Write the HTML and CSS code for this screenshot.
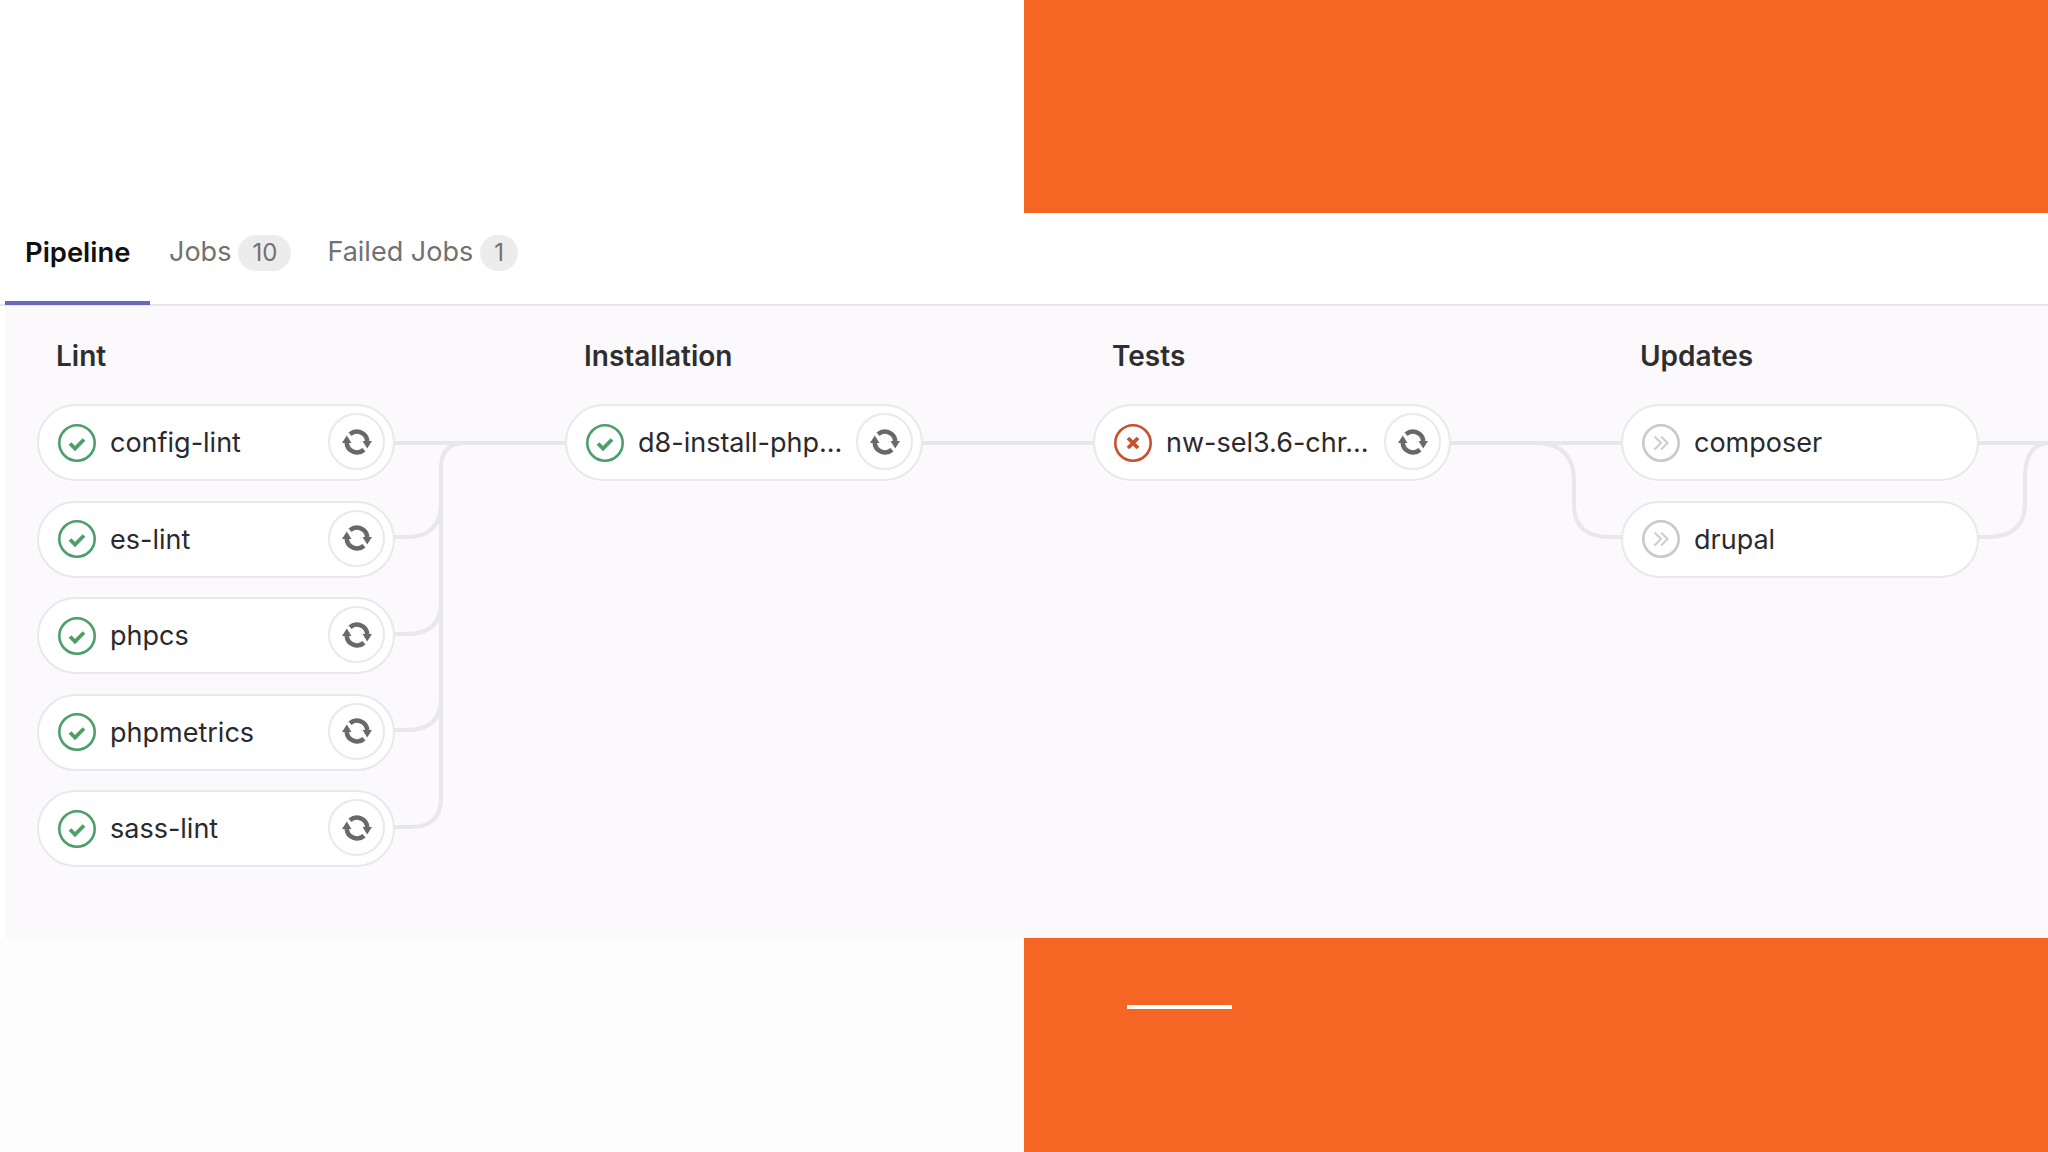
FILE: index.html
```html
<!DOCTYPE html>
<html lang="en">
<head>
  <meta charset="UTF-8">
  <title>Pipeline</title>
  <link rel="stylesheet" href="styles.css">
</head>
<body>

  <svg class="icon-defs" width="0" height="0">
    <symbol id="icon-success" viewBox="0 0 38 38">
      <circle cx="19" cy="19" r="17.7" fill="#fff" stroke="#4c9e6a" stroke-width="2.6"/>
      <path d="M12 19.5l5 5 9-9" fill="none" stroke="#4c9e6a" stroke-width="3.8"/>
    </symbol>
    <symbol id="icon-failed" viewBox="0 0 38 38">
      <circle cx="19" cy="19" r="17.7" fill="#fff" stroke="#c9502f" stroke-width="2.6"/>
      <path d="M14 14l10 10M24 14l-10 10" fill="none" stroke="#c9502f" stroke-width="3.8"/>
    </symbol>
    <symbol id="icon-skipped" viewBox="0 0 38 38">
      <circle cx="19" cy="19" r="17.7" fill="#fff" stroke="#c9c9c9" stroke-width="2.6"/>
      <path d="M12.5 12.5l6.5 6.5-6.5 6.5M19 12.5l6.5 6.5-6.5 6.5" fill="none" stroke="#cfcfcf" stroke-width="2.2"/>
    </symbol>
    <symbol id="icon-retry" viewBox="0 0 30 28">
      <path d="M8 6.3A10.4 10.4 0 0 1 25.3 13" fill="none" stroke="#68686d" stroke-width="4.6"/>
      <path d="M22 21.7A10.4 10.4 0 0 1 4.7 15" fill="none" stroke="#68686d" stroke-width="4.6"/>
      <path d="M20.5 13h9.5l-4.8 7.5z" fill="#68686d"/>
      <path d="M0 15h9.5l-4.7-7.5z" fill="#68686d"/>
    </symbol>
  </svg>

  <div class="top-band">
    <div class="orange-block"></div>
  </div>

  <nav class="tabs">
    <div class="tab active">Pipeline</div>
    <div class="tab">Jobs <span class="badge">10</span></div>
    <div class="tab">Failed Jobs <span class="badge badge-small">1</span></div>
  </nav>

  <div class="pipeline">
    <!-- connector lines between the stages, in panel coordinates -->
    <svg class="connectors" viewBox="0 0 2043 632" width="2043" height="632">
      <g fill="none" stroke="#e8e7ea" stroke-width="4">
        <path d="M388 137H560"/>
        <path d="M460 137Q436 137 436 162V492Q436 521 406 521H388"/>
        <path d="M388 231H402Q436 231 436 196"/>
        <path d="M388 328H402Q436 328 436 296"/>
        <path d="M388 424H402Q436 424 436 392"/>
        <path d="M916 137H1088"/>
        <path d="M1444 137H1616"/>
        <path d="M1530 137Q1569 137 1569 175V199Q1569 231 1605 231H1620"/>
        <path d="M1972 137H2043"/>
        <path d="M1972 231H1982Q2020 231 2020 197V171Q2020 139 2043 137"/>
      </g>
    </svg>

    <div class="stage">
      <h3 class="stage-title">Lint</h3>
      <div class="job"><svg class="status"><use href="#icon-success"/></svg><span class="job-name">config-lint</span><span class="retry"><svg><use href="#icon-retry"/></svg></span></div>
      <div class="job"><svg class="status"><use href="#icon-success"/></svg><span class="job-name">es-lint</span><span class="retry"><svg><use href="#icon-retry"/></svg></span></div>
      <div class="job"><svg class="status"><use href="#icon-success"/></svg><span class="job-name">phpcs</span><span class="retry"><svg><use href="#icon-retry"/></svg></span></div>
      <div class="job"><svg class="status"><use href="#icon-success"/></svg><span class="job-name">phpmetrics</span><span class="retry"><svg><use href="#icon-retry"/></svg></span></div>
      <div class="job"><svg class="status"><use href="#icon-success"/></svg><span class="job-name">sass-lint</span><span class="retry"><svg><use href="#icon-retry"/></svg></span></div>
    </div>

    <div class="stage">
      <h3 class="stage-title">Installation</h3>
      <div class="job"><svg class="status"><use href="#icon-success"/></svg><span class="job-name">d8-install-php...</span><span class="retry"><svg><use href="#icon-retry"/></svg></span></div>
    </div>

    <div class="stage">
      <h3 class="stage-title">Tests</h3>
      <div class="job"><svg class="status"><use href="#icon-failed"/></svg><span class="job-name">nw-sel3.6-chr...</span><span class="retry"><svg><use href="#icon-retry"/></svg></span></div>
    </div>

    <div class="stage">
      <h3 class="stage-title">Updates</h3>
      <div class="job"><svg class="status"><use href="#icon-skipped"/></svg><span class="job-name">composer</span></div>
      <div class="job"><svg class="status"><use href="#icon-skipped"/></svg><span class="job-name">drupal</span></div>
    </div>
  </div>

  <div class="bottom-band">
    <div class="orange-block">
      <div class="rule"></div>
    </div>
  </div>

</body>
</html>
```

FILE: styles.css
```css
* {
  box-sizing: border-box;
}
html, body {
  margin: 0;
  padding: 0;
}
body {
  width: 2048px;
  height: 1152px;
  overflow: hidden;
  background-color: #fff;
  font-family: Inter, "Liberation Sans", sans-serif;
  color: #2e2e2e;
}
.icon-defs {
  position: absolute;
}

.top-band {
  height: 213px;
  display: flex;
  justify-content: flex-end;
}
.orange-block {
  width: 1024px;
  background-color: #f56624;
}

.tabs {
  height: 93px;
  padding-left: 5px;
  display: flex;
  border-bottom: 2px solid #e6e5e8;
}
.tab {
  height: 92px;
  padding: 21px 17px 0 19px;
  display: flex;
  align-items: flex-start;
  gap: 7px;
  font-size: 27px;
  line-height: 36px;
  color: #717171;
}
.tab.active {
  width: 145px;
  padding-left: 20px;
  font-size: 27.4px;
  font-weight: 600;
  color: #111;
  border-bottom: 4px solid #6666c4;
}
.badge {
  width: 53px;
  height: 36px;
  margin-top: 1px;
  border-radius: 18px;
  background-color: #ececec;
  font-size: 24px;
  text-align: center;
}
.badge-small {
  width: 38px;
}

.pipeline {
  position: relative;
  height: 632px;
  margin-left: 5px;
  padding: 33px 0 0 32px;
  display: flex;
  background-color: #fbf9fc;
}
.connectors {
  position: absolute;
  top: 0;
  left: 0;
}
.stage {
  position: relative;
  flex: none;
  width: 528px;
}
.stage-title {
  margin: 0 0 31px 19px;
  font-size: 28px;
  line-height: 34px;
  font-weight: 600;
  color: #2e2e2e;
}
.job {
  width: 358px;
  height: 77px;
  margin-bottom: 19.6px;
  padding: 0 8px 0 19px;
  display: flex;
  align-items: center;
  background-color: #fff;
  border: 2px solid #e9e8eb;
  border-radius: 39px;
}
.status {
  width: 38px;
  height: 38px;
  flex: none;
}
.job-name {
  margin-left: 14px;
  flex: 1;
  font-size: 27px;
  white-space: nowrap;
  color: #2a2a2e;
}
.retry {
  width: 57px;
  height: 57px;
  flex: none;
  display: flex;
  align-items: center;
  justify-content: center;
  margin-top: -2px;
  border: 2px solid #e9e8eb;
  border-radius: 50%;
}
.retry svg {
  width: 30px;
  height: 28px;
}

.bottom-band {
  height: 214px;
  display: flex;
  justify-content: flex-end;
  background-color: #fefdfe;
}
.rule {
  width: 105px;
  height: 4px;
  margin: 67px 0 0 103px;
  background-color: #fff;
}
```
